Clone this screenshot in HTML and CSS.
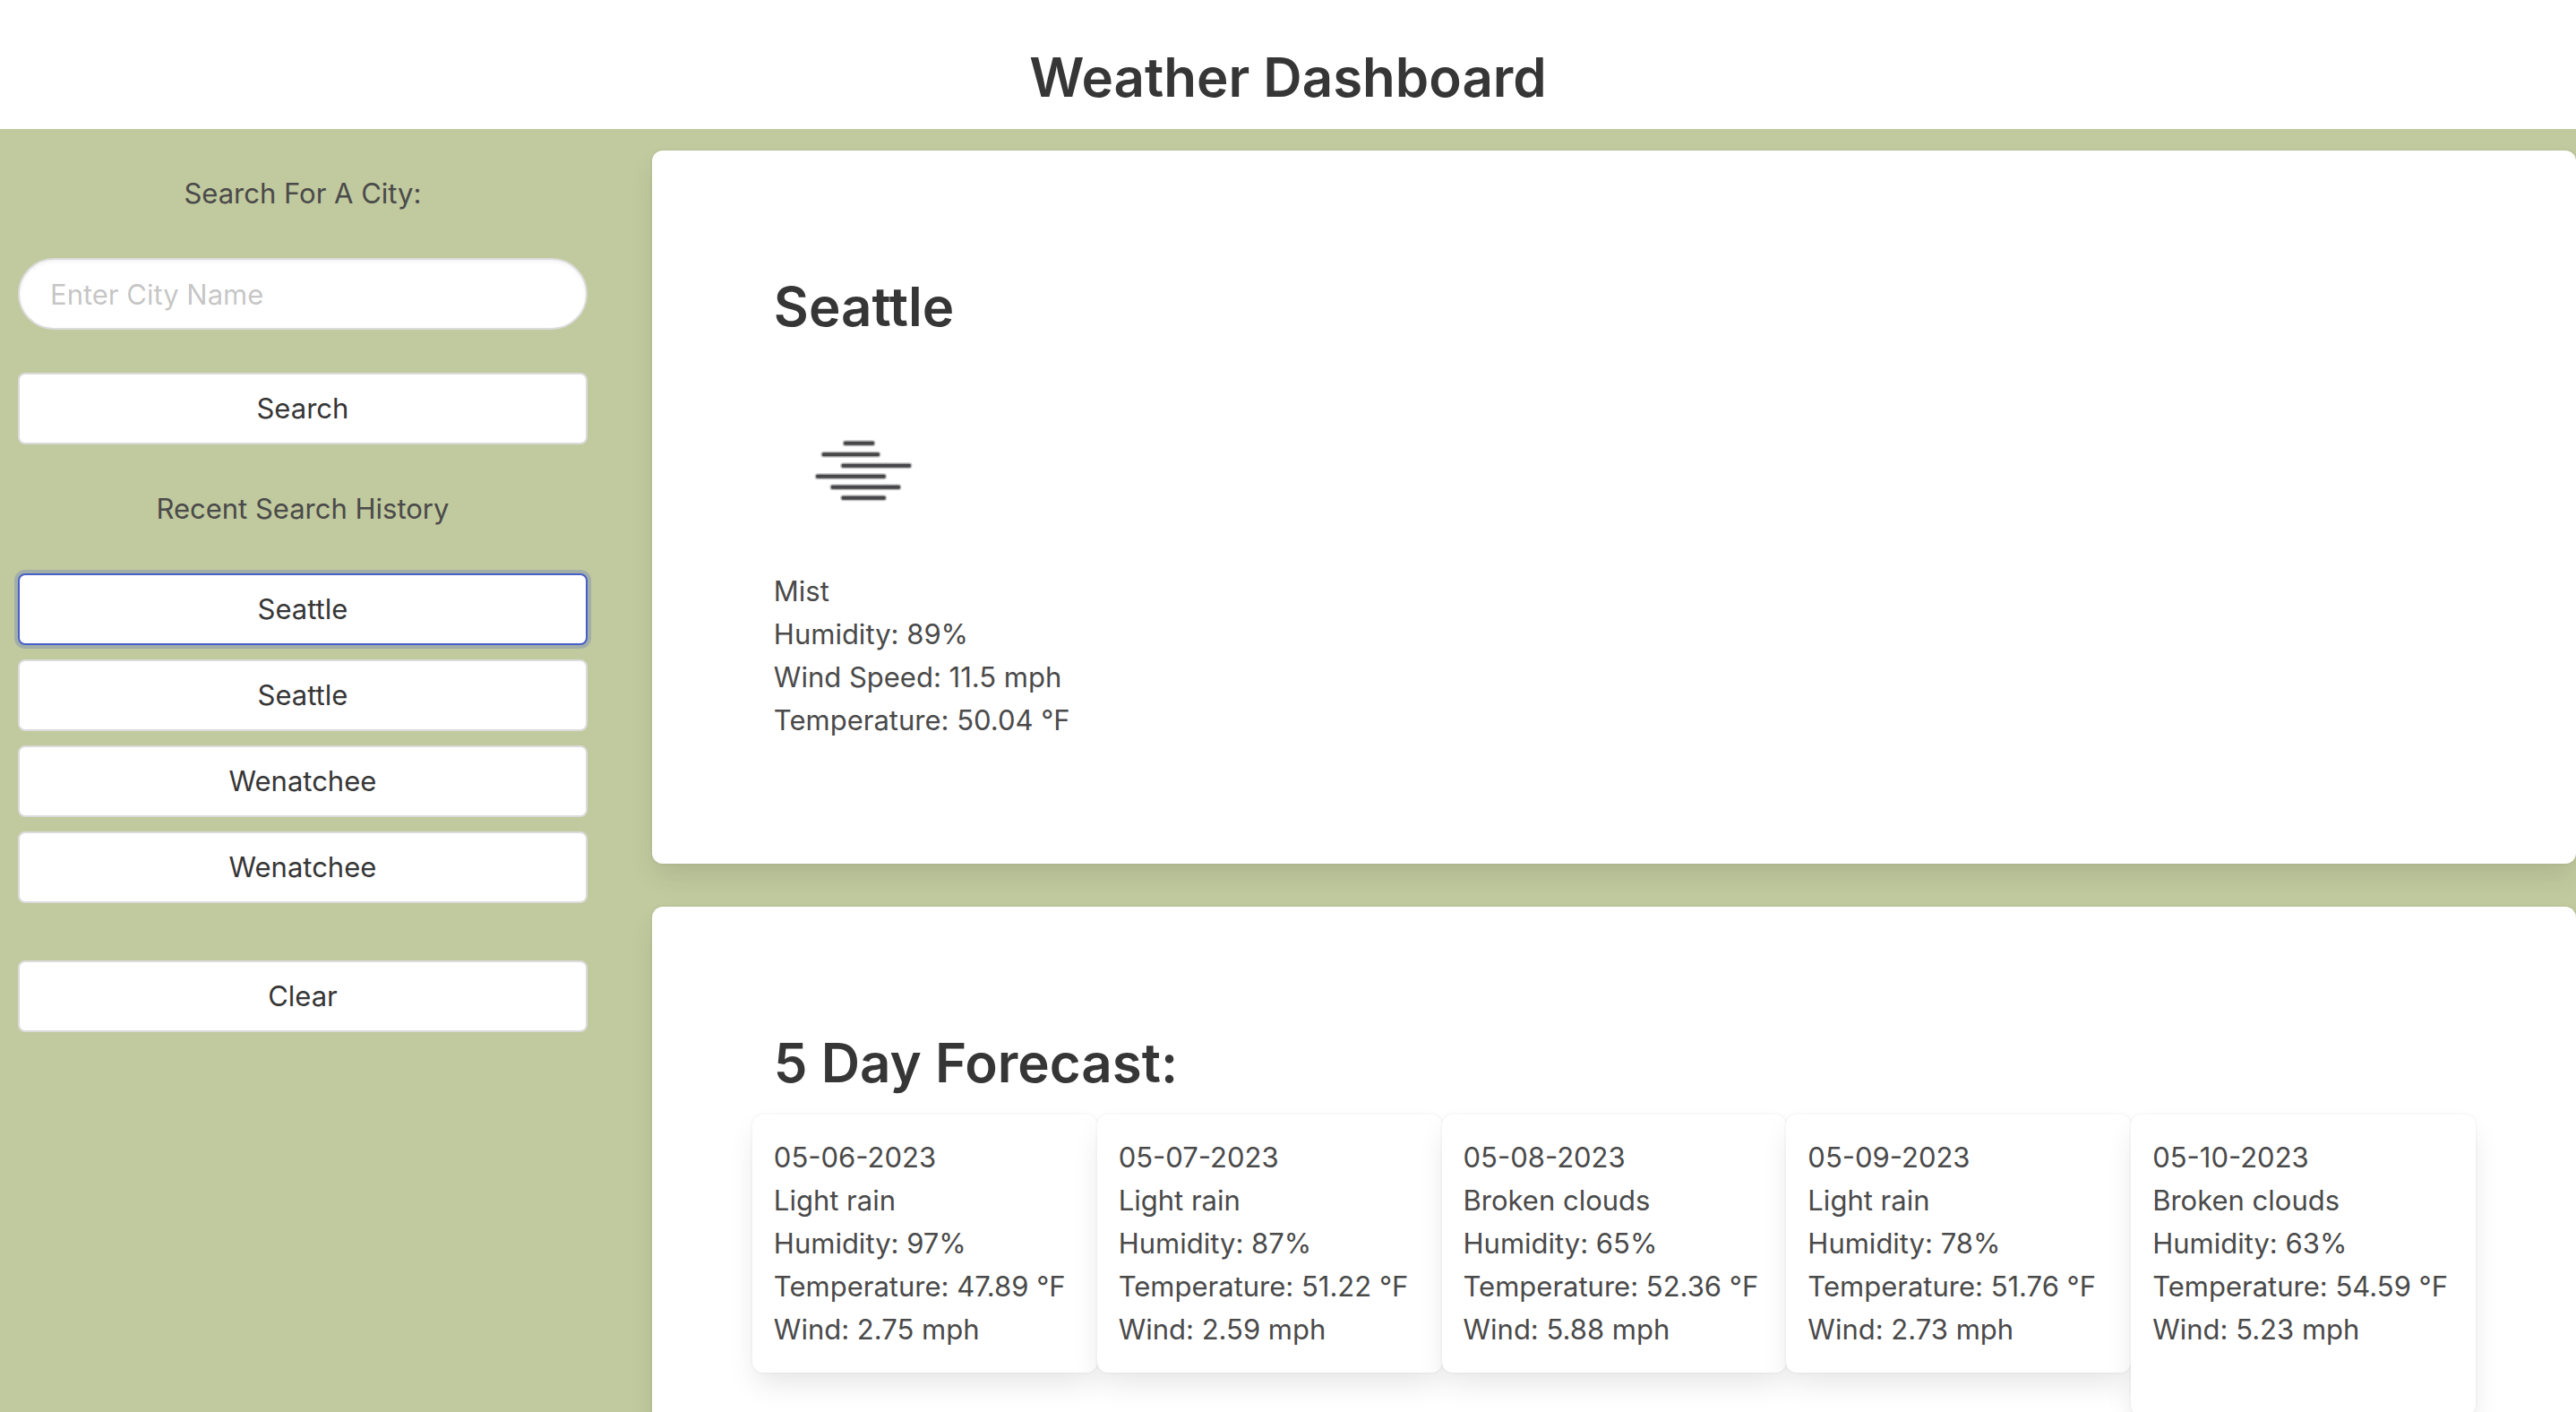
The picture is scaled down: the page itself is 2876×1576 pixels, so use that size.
FILE: index.html
```html
<!DOCTYPE html>
<html lang="en">
<head>
  <meta charset="utf-8">
  <meta name="viewport" content="width=device-width, initial-scale=1">
  <title>Weather Dashboard</title>
  <link rel="stylesheet" href="styles.css">
</head>
<body>
  <header class="page-header">
    <h1 class="title">Weather Dashboard</h1>
  </header>
  <div class="layout">
    <aside class="sidebar">
      <form class="search" onsubmit="return false">
        <label class="caption" for="city">Search For A City:</label>
        <input class="field" id="city" type="text" placeholder="Enter City Name">
        <button class="button" type="submit">Search</button>
      </form>
      <section class="history">
        <p class="caption">Recent Search History</p>
        <div class="history-list">
          <button class="button is-active" type="button">Seattle</button>
          <button class="button" type="button">Seattle</button>
          <button class="button" type="button">Wenatchee</button>
          <button class="button" type="button">Wenatchee</button>
        </div>
      </section>
      <button class="button" type="button">Clear</button>
    </aside>
    <main class="content">
      <section class="card panel">
        <h2 class="title">Seattle</h2>
        <svg class="weather-icon" viewBox="0 0 200 200" role="img" aria-label="Mist">
          <defs>
            <path id="mist" d="M80 70.7H110M55.7 83.2H116M77.5 95.7H151M49 107.7H122.7M65.7 119.7H139M77.5 131.7H122.7"/>
          </defs>
          <g stroke="#48484a" stroke-linecap="round">
            <use href="#mist" stroke-width="7" stroke-opacity="0.35"/>
            <use href="#mist" stroke-width="4"/>
          </g>
        </svg>
        <div>
          <p>Mist</p>
          <p>Humidity: 89%</p>
          <p>Wind Speed: 11.5 mph</p>
          <p>Temperature: 50.04 °F</p>
        </div>
      </section>
      <section class="card panel">
        <h2 class="title">5 Day Forecast:</h2>
        <div class="forecast">
          <article class="card day">
            <p>05-06-2023</p>
            <p>Light rain</p>
            <p>Humidity: 97%</p>
            <p>Temperature: 47.89 °F</p>
            <p>Wind: 2.75 mph</p>
          </article>
          <article class="card day">
            <p>05-07-2023</p>
            <p>Light rain</p>
            <p>Humidity: 87%</p>
            <p>Temperature: 51.22 °F</p>
            <p>Wind: 2.59 mph</p>
          </article>
          <article class="card day">
            <p>05-08-2023</p>
            <p>Broken clouds</p>
            <p>Humidity: 65%</p>
            <p>Temperature: 52.36 °F</p>
            <p>Wind: 5.88 mph</p>
          </article>
          <article class="card day">
            <p>05-09-2023</p>
            <p>Light rain</p>
            <p>Humidity: 78%</p>
            <p>Temperature: 51.76 °F</p>
            <p>Wind: 2.73 mph</p>
          </article>
          <article class="card day">
            <p>05-10-2023</p>
            <p>Broken clouds</p>
            <p>Humidity: 63%</p>
            <p>Temperature: 54.59 °F</p>
            <p>Wind: 5.23 mph</p>
          </article>
        </div>
      </section>
    </main>
  </div>
</body>
</html>
```
FILE: styles.css
```css
* {
  box-sizing: border-box;
  margin: 0;
}

body {
  display: flex;
  flex-direction: column;
  height: 100vh;
  overflow: hidden;
  background: #fff;
  color: #4a4a4a;
  font: 400 31px/48px Inter, "Liberation Sans", sans-serif;
}

.page-header {
  flex: none;
  padding: 48px 24px 24px;
  text-align: center;
}

.title {
  padding-top: 4px;
  color: #363636;
  font-size: 60px;
  font-weight: 600;
  line-height: 68px;
}

.layout {
  flex: 1;
  display: grid;
  grid-template-columns: 47fr 153fr;
  min-height: 0;
  background: #c1c99e;
}

.sidebar {
  display: flex;
  flex-direction: column;
  gap: 64px;
  padding: 48px 20px;
}

.search {
  display: flex;
  flex-direction: column;
  gap: 48px;
  margin-bottom: -16px;
}

.caption {
  text-align: center;
}

.history,
.history-list {
  display: flex;
  flex-direction: column;
}

.history {
  gap: 48px;
}

.history-list {
  gap: 16px;
}

.field,
.button {
  width: 100%;
  height: 80px;
  border: 2px solid #dbdbdb;
  background: #fff;
  color: #363636;
  font: inherit;
}

.field {
  padding: 0 34px;
  border-radius: 40px;
  box-shadow: inset 0 2px 4px rgba(10, 10, 10, 0.05);
}

.field::placeholder {
  color: rgba(54, 54, 54, 0.3);
  opacity: 1;
}

.button {
  border-radius: 8px;
  cursor: pointer;
}

.button.is-active {
  border-color: #485fc7;
  box-shadow: 0 0 0 4px rgba(72, 95, 199, 0.25);
}

.content {
  display: flex;
  flex-direction: column;
  gap: 48px;
  min-width: 0;
  padding: 24px 0 24px 52px;
}

.card {
  border-radius: 12px;
  background: #fff;
  box-shadow: 0 16px 32px -4px rgba(10, 10, 10, 0.1), 0 0 0 2px rgba(10, 10, 10, 0.02);
}

.panel {
  flex: none;
  padding: 136px;
}

.weather-icon {
  display: block;
  width: 200px;
  height: 200px;
  margin: 48px 0 12px;
}

.forecast {
  display: grid;
  grid-template-columns: repeat(5, 1fr);
  align-items: start;
  margin: 24px -24px 0;
}

.day {
  padding: 24px;
}

.day:last-child {
  padding-bottom: 72px;
}
```
